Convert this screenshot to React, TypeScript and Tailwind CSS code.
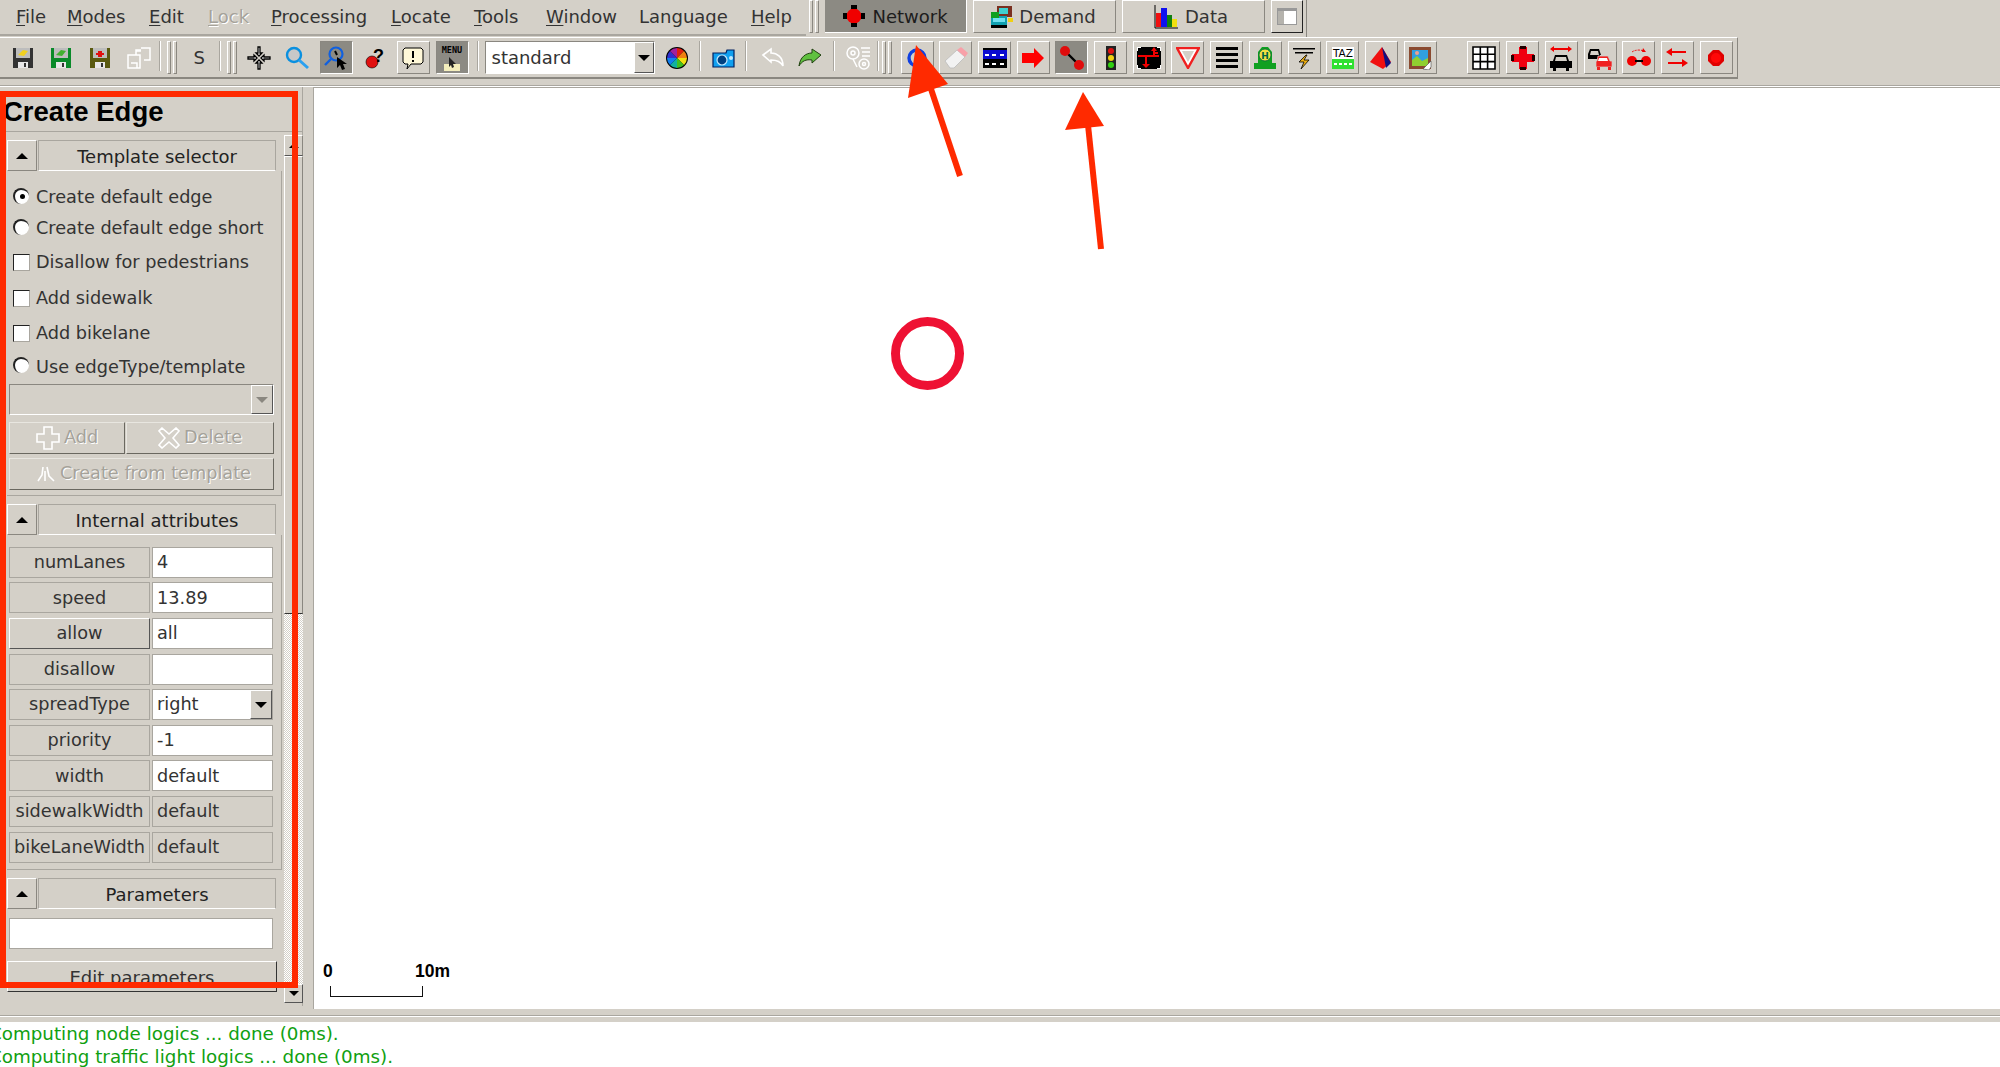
import type { ReactNode } from "react";

const RAISED = "border border-t-white border-l-white border-r-[#8a8780] border-b-[#8a8780]";
const FIELD = "border border-[#a9a69f]";

function Disk({ frame, mark }: { frame: string; mark: ReactNode }) {
  return (
    <svg width="22" height="22" viewBox="0 0 22 22">
      <path d="M1 1h20v20H1z" fill={frame} />
      <path d="M4 1h14v10H4z" fill="#bdbdbd" />
      <path d="M6 15h10v6H6z" fill="#e8e8e8" />
      <path d="M12 16h2v4h-2z" fill="#333" />
      {mark}
    </svg>
  );
}

const icons: Record<string, ReactNode> = {
  saveYellow: <Disk frame="#333" mark={<path d="M6 8l5-5 5 1-4 5z" fill="#f0d020" />} />,
  saveGreen: <Disk frame="#0a8a2a" mark={<path d="M6 8l5-5 5 1-4 5z" fill="#40b030" />} />,
  saveRed: <Disk frame="#5a5a10" mark={<path d="M9 4h4v2h2v2h-2v2H9V8H7V6h2z" fill="#e01010" />} />,
  saveAll: (
    <svg width="24" height="24" viewBox="0 0 24 24" fill="none" stroke="#fff" strokeWidth="1.5">
      <path d="M1 9h12v13H1zM4 17h6v5M9 5h5M14 2h9v12h-6" />
      <path d="M9 9V4h5" />
    </svg>
  ),
  center: (
    <svg width="26" height="26" viewBox="0 0 26 26" fill="#fff" stroke="#000" strokeWidth="1.3">
      <path d="M13 11l-3-3h2V2h2v6h2zM13 15l-3 3h2v6h2v-6h2zM11 13l-3-3v2H2v2h6v2zM15 13l3-3v2h6v2h-6v2z" />
    </svg>
  ),
  zoom: (
    <svg width="26" height="26" viewBox="0 0 26 26" fill="none">
      <circle cx="10" cy="10" r="7" fill="#c8c8c8" stroke="#0a90e0" strokeWidth="2.4" />
      <path d="M15 15l9 8" stroke="#2aa0f0" strokeWidth="3" />
    </svg>
  ),
  locate: (
    <svg width="26" height="26" viewBox="0 0 26 26" fill="none">
      <circle cx="13" cy="9" r="6.5" fill="#8c8a83" stroke="#1060e0" strokeWidth="2.2" />
      <path d="M8 14l-6 6" stroke="#1060e0" strokeWidth="2.4" />
      <path d="M12 6l2 4" stroke="#000" strokeWidth="2" />
      <path d="M14 12v11l3-3 2 5 3-1-2-5h4z" fill="#000" />
    </svg>
  ),
  inspect: (
    <svg width="24" height="24" viewBox="0 0 24 24">
      <circle cx="9" cy="16" r="6" fill="#e01010" stroke="#000" strokeWidth="0.6" />
      <text x="10" y="16" fontSize="18" fontWeight="700" fontFamily="Liberation Sans, sans-serif" fill="#000">?</text>
    </svg>
  ),
  bubble: (
    <svg width="22" height="24" viewBox="0 0 22 24">
      <path d="M3 2h16l2 2v12l-2 2H9l-4 5 1-5H3l-2-2V4z" fill="#fff8d8" stroke="#000" strokeWidth="1" />
      <path d="M10 5h2v7h-2zM10 14h2v2h-2z" fill="#000" />
    </svg>
  ),
  menu: (
    <svg width="28" height="28" viewBox="0 0 28 28">
      <text x="14" y="9" textAnchor="middle" fontSize="8.5" fontFamily="DejaVu Sans Mono, monospace" fontWeight="700" fill="#000">MENU</text>
      <path d="M6 20h16v7H6z" fill="#f4eebc" />
      <path d="M11 13v10l2-2 1 3 2-1-1-3h3z" fill="#222" />
    </svg>
  ),
  colors: (
    <svg width="24" height="24" viewBox="0 0 24 24">
      <circle cx="12" cy="12" r="11" fill="#000" />
      <path d="M12 12V2a10 10 0 0 1 7 3z" fill="#e02010" />
      <path d="M12 12l7-7a10 10 0 0 1 3 7z" fill="#f08010" />
      <path d="M12 12h10a10 10 0 0 1-3 7z" fill="#f0e010" />
      <path d="M12 12l7 7a10 10 0 0 1-7 3z" fill="#40c020" />
      <path d="M12 12v10a10 10 0 0 1-7-3z" fill="#10b0a0" />
      <path d="M12 12l-7 7a10 10 0 0 1-3-7z" fill="#1080f0" />
      <path d="M12 12H2a10 10 0 0 1 3-7z" fill="#3030d0" />
      <path d="M12 12L5 5a10 10 0 0 1 7-3z" fill="#a020a0" />
    </svg>
  ),
  camera: (
    <svg width="24" height="22" viewBox="0 0 24 22">
      <path d="M1 6h13l1-3h7v17H1z" fill="#10a0f0" stroke="#002060" strokeWidth="1.2" />
      <circle cx="10" cy="13" r="5" fill="#004080" stroke="#c0e8ff" strokeWidth="1.2" />
      <circle cx="19" cy="11" r="2" fill="#c0e8ff" />
    </svg>
  ),
  undo: (
    <svg width="24" height="22" viewBox="0 0 24 22" fill="none" stroke="#fff" strokeWidth="1.6">
      <path d="M2 8l8-6v4c6 0 12 4 12 13-2-4-6-6-12-6v2z" />
    </svg>
  ),
  redo: (
    <svg width="24" height="20" viewBox="0 0 24 20">
      <path d="M23 7l-9-6v4C8 5 2 9 1 18c3-5 7-7 13-6v3z" fill="#60c040" stroke="#204010" strokeWidth="1" />
    </svg>
  ),
  gear: (
    <svg width="26" height="26" viewBox="0 0 26 26" fill="none" stroke="#fff" strokeWidth="1.5">
      <circle cx="8" cy="8" r="6" />
      <circle cx="8" cy="8" r="2" />
      <circle cx="19" cy="19" r="5" />
      <circle cx="19" cy="19" r="1.5" />
      <path d="M16 3h9M17 7h8M17 11h8M8 14l4 8" />
    </svg>
  ),
  junction: (
    <svg width="24" height="24" viewBox="0 0 24 24">
      <circle cx="12" cy="12" r="8" fill="none" stroke="#1040e0" strokeWidth="3.4" />
    </svg>
  ),
  eraser: (
    <svg width="26" height="26" viewBox="0 0 26 26">
      <path d="M2 16L14 5l8 7-11 11H7z" fill="#f2f2f2" stroke="#bbb" strokeWidth="0.8" />
      <path d="M14 5l4-3 7 6-3 4z" fill="#f8a0a8" />
    </svg>
  ),
  lanes: (
    <svg width="26" height="26" viewBox="0 0 26 26">
      <path d="M1 3h24v20H1z" fill="#000" />
      <path d="M1 5h24v9H1z" fill="#0a0ad0" />
      <path d="M3 9h4v2H3zM10 9h4v2h-4zM18 9h4v2h-4zM3 18h4v2H3zM10 18h4v2h-4zM18 18h4v2h-4z" fill="#fff" />
    </svg>
  ),
  arrow: (
    <svg width="24" height="20" viewBox="0 0 24 20">
      <path d="M1 5h12V0l10 10-10 10v-5H1z" fill="#ff0000" />
    </svg>
  ),
  edge: (
    <svg width="26" height="26" viewBox="0 0 26 26">
      <path d="M7 7l13 13" stroke="#000" strokeWidth="2.4" />
      <circle cx="6" cy="6" r="5" fill="#e00c0c" />
      <circle cx="20" cy="20" r="5" fill="#e00c0c" />
    </svg>
  ),
  tls: (
    <svg width="12" height="26" viewBox="0 0 12 26">
      <path d="M1 1h10v24H1z" fill="#222" />
      <circle cx="6" cy="6" r="3" fill="#e01010" />
      <circle cx="6" cy="13" r="3" fill="#f0d010" />
      <circle cx="6" cy="20" r="3" fill="#30d010" />
    </svg>
  ),
  connect: (
    <svg width="26" height="26" viewBox="0 0 26 26">
      <path d="M1 2h24v22H1z" fill="#000" />
      <path d="M1 2h4v1H2v3H1zM21 2h4v4h-1V3h-3zM1 20h1v3h3v1H1zM24 20h1v4h-4v-1h3z" fill="#fff" />
      <path d="M2 10h21v2H2zM9 10h2v11H9z" fill="#f00000" />
      <path d="M6 19h8l-4 4zM17 11V5h2v6zM15 6l3-4 3 4zM19 7h3v2h-3z" fill="#f00000" />
    </svg>
  ),
  yield: (
    <svg width="24" height="22" viewBox="0 0 24 22">
      <path d="M1 1h22L12 21z" fill="#fff" stroke="#f02020" strokeWidth="2.4" />
      <path d="M6 4h12l-6 11z" fill="#d4d0c8" />
    </svg>
  ),
  stripes: (
    <svg width="24" height="24" viewBox="0 0 24 24">
      <path d="M1 1h22v3H1zM1 7h22v3H1zM1 13h22v3H1zM1 19h22v3H1z" fill="#000" />
    </svg>
  ),
  stop: (
    <svg width="24" height="24" viewBox="0 0 24 24">
      <path d="M1 23v-6h4V6l4-5h6l4 5v11h4v6z" fill="#10a020" />
      <circle cx="12" cy="9" r="6" fill="#f0e040" stroke="#064" strokeWidth="0.8" />
      <text x="12" y="12.5" textAnchor="middle" fontSize="9" fontWeight="700" fontFamily="DejaVu Sans, sans-serif" fill="#064">H</text>
    </svg>
  ),
  charging: (
    <svg width="24" height="24" viewBox="0 0 24 24">
      <path d="M1 2h22v1.5H1zM3 6h18v1.5H3z" fill="#000" />
      <path d="M14 9l-7 7h5l-3 7 8-9h-5l3-5z" fill="#f0b010" stroke="#000" strokeWidth="0.8" />
    </svg>
  ),
  taz: (
    <svg width="24" height="24" viewBox="0 0 24 24">
      <path d="M1 1h22v12H1z" fill="#fff" />
      <text x="12" y="11" textAnchor="middle" fontSize="10.5" fontFamily="DejaVu Sans, sans-serif" fill="#000">TAZ</text>
      <path d="M1 13h22v10H1z" fill="#30e030" />
      <path d="M3 17h3v2H3zM8 17h3v2H8zM13 17h3v2h-3zM18 17h3v2h-3z" fill="#fff" />
    </svg>
  ),
  poly: (
    <svg width="24" height="24" viewBox="0 0 24 24">
      <path d="M1 16L13 1l9 15-8 7z" fill="#f01010" />
      <path d="M13 1l9 16-5 5z" fill="#101080" />
    </svg>
  ),
  picture: (
    <svg width="24" height="24" viewBox="0 0 24 24">
      <path d="M1 1h22v22H1z" fill="#8a4a30" />
      <path d="M4 4h16v16H4z" fill="#30a0e0" />
      <path d="M4 20v-6l5-4 5 5 6-3v8z" fill="#90d030" />
      <circle cx="9" cy="7" r="2" fill="#f0a090" />
      <path d="M15 23l8-8v6l-2 3z" fill="#fff" stroke="#444" strokeWidth="0.6" />
    </svg>
  ),
  grid: (
    <svg width="24" height="24" viewBox="0 0 24 24" fill="#fff" stroke="#000" strokeWidth="1.6">
      <path d="M1 1h22v22H1zM1 8.3h22M1 15.6h22M8.3 1v22M15.6 1v22" />
    </svg>
  ),
  cross: (
    <svg width="24" height="24" viewBox="0 0 24 24">
      <path d="M8 1h8v7h7v8h-7v7H8v-7H1V8h7z" fill="#f00010" />
      <path d="M9 0h6v3H9zM9 21h6v3H9zM0 9h3v6H0zM21 9h3v6h-3z" fill="#200000" />
    </svg>
  ),
  carArrows: (
    <svg width="24" height="26" viewBox="0 0 24 26">
      <path d="M1 4l4-3v2h14V1l4 3-4 3V5H5v2z" fill="#f00000" />
      <path d="M6 10h12l2 6h3v7h-3v3h-3v-3H7v3H4v-3H1v-7h3z" fill="#000" />
      <path d="M7 12h10l1 4H6z" fill="#d4d0c8" />
    </svg>
  ),
  cars: (
    <svg width="26" height="24" viewBox="0 0 26 24" fill="none">
      <path d="M3 3h9l2 6h-1v4H1V8z" fill="#000" />
      <path d="M4 5h7l1 4H3z" fill="#d4d0c8" />
      <path d="M11 10h10l2 5h2v6H9v-6h1z" fill="#f02020" stroke="#d4d0c8" strokeWidth="0.7" />
      <path d="M12 12h8l1 3H11z" fill="#fff" />
      <path d="M10 21h3v3h-3zM21 21h3v3h-3z" fill="#f02020" />
    </svg>
  ),
  stack: (
    <svg width="24" height="22" viewBox="0 0 24 22">
      <path d="M5 5a8 4 0 0 1 12-1" fill="none" stroke="#f00000" strokeWidth="1" strokeDasharray="2 1" />
      <path d="M16 1l3 4h-4z" fill="#f00000" />
      <circle cx="5" cy="14" r="5" fill="#f00000" />
      <circle cx="19" cy="14" r="5" fill="#f00000" />
      <path d="M8 13h8v2H8z" fill="#000" />
    </svg>
  ),
  swap: (
    <svg width="24" height="20" viewBox="0 0 24 20" fill="#f00000">
      <path d="M1 4l6-4v3h14v2H7v3zM23 15l-6 4v-3H3v-2h14v-3z" />
    </svg>
  ),
  dot: (
    <svg width="18" height="18" viewBox="0 0 18 18">
      <path d="M6 1h6l5 5v6l-5 5H6l-5-5V6z" fill="#e00000" />
      <circle cx="9" cy="9" r="5" fill="#ff0808" />
    </svg>
  ),
};

const menus: [string, string, string][] = [
  ["F", "ile", "w-[51px]"],
  ["M", "odes", "w-[82px]"],
  ["E", "dit", "w-[59px]"],
  ["L", "ock", "w-[63px]"],
  ["P", "rocessing", "w-[120px]"],
  ["L", "ocate", "w-[83px]"],
  ["T", "ools", "w-[72px]"],
  ["W", "indow", "w-[93px]"],
];

function Flat({ name, children, className = "" }: { name?: string; children?: ReactNode; className?: string }) {
  return (
    <div className={`w-[33px] h-[33px] shrink-0 flex items-center justify-center ${className}`}>
      {name ? icons[name] : children}
    </div>
  );
}

function IconBtn({ name, active }: { name: string; active?: boolean }) {
  return (
    <div className={`w-[33px] h-[33px] shrink-0 flex items-center justify-center ${active ? "bg-[#8c8a83] border border-t-[#8a8780] border-l-[#8a8780] border-r-white border-b-white" : RAISED}`}>
      {icons[name]}
    </div>
  );
}

function Grip({ className = "" }: { className?: string }) {
  return (
    <div className={`h-[33px] w-[10px] shrink-0 flex justify-between ${className}`}>
      <div className={`w-[4px] ${RAISED}`} />
      <div className={`w-[4px] ${RAISED}`} />
    </div>
  );
}

function Sep({ className }: { className: string }) {
  return <div className={`h-[30px] w-[2px] shrink-0 bg-[#a9a69f] border-r border-white ${className}`} />;
}

function TabBtn({ label, active, icon, className }: { label: string; active?: boolean; icon: ReactNode; className: string }) {
  return (
    <div className={`h-[33px] shrink-0 flex items-center justify-center text-[18px] ${className} ${active ? "bg-[#8c8a83] text-[#1c1c1c] border-b border-r border-white" : RAISED + " text-[#333]"}`}>
      {icon}
      {label}
    </div>
  );
}

function Header({ label }: { label: string }) {
  return (
    <div className="flex h-[31px] gap-px shrink-0">
      <div className={`w-[30px] flex items-center justify-center ${RAISED} border-t-[#d4d0c8]`}>
        <div className="w-0 h-0 border-x-[6px] border-x-transparent border-b-[6px] border-b-black" />
      </div>
      <div className="w-[238px] flex items-center justify-center pt-px text-[18px] text-[#222] border border-[#a9a69f] border-b-white">
        {label}
      </div>
    </div>
  );
}

function Radio({ on, label, className }: { on?: boolean; label: string; className: string }) {
  return (
    <div className={`flex items-center gap-[7px] pl-[6px] text-[17.7px] text-[#333] ${className}`}>
      <div className="w-[16px] h-[16px] -mt-[4px] rounded-full bg-white border-t-2 border-l-2 border-[#222] flex items-center justify-center">
        {on && <div className="w-[5px] h-[5px] rounded-full bg-black" />}
      </div>
      {label}
    </div>
  );
}

function Check({ label, className }: { label: string; className: string }) {
  return (
    <div className={`flex items-center gap-[6px] pl-[6px] text-[17.7px] text-[#333] ${className}`}>
      <div className="w-[17px] h-[17px] bg-white border-t border-l border-t-[#222] border-l-[#222] border-r border-b border-r-[#a9a69f] border-b-[#a9a69f]" />
      {label}
    </div>
  );
}

function DisabledBtn({ className, icon, label }: { className: string; icon: ReactNode; label: string }) {
  return (
    <div className={`h-[32px] flex items-center justify-center gap-[4px] text-[17.7px] text-[#a5a29a] [text-shadow:1px_1px_0_#fff] border border-t-[#e8e6e0] border-l-[#e8e6e0] border-r-[#6a6860] border-b-[#6a6860] ${className}`}>
      {icon}
      {label}
    </div>
  );
}

const rows: { label: string; value: string; kind?: "combo" | "off"; strong?: boolean }[] = [
  { label: "numLanes", value: "4" },
  { label: "speed", value: "13.89" },
  { label: "allow", value: "all", strong: true },
  { label: "disallow", value: "" },
  { label: "spreadType", value: "right", kind: "combo" },
  { label: "priority", value: "-1" },
  { label: "width", value: "default" },
  { label: "sidewalkWidth", value: "default", kind: "off" },
  { label: "bikeLaneWidth", value: "default", kind: "off" },
];

function AttrRow({ label, value, kind, strong }: (typeof rows)[number]) {
  return (
    <div className="flex h-[31px] gap-[2px] text-[17.7px] text-[#333]">
      <div className={`w-[141px] flex items-center justify-center ${strong ? RAISED + " border-r-[#555] border-b-[#555]" : FIELD}`}>{label}</div>
      <div className={`w-[121px] flex items-center pl-[4px] relative ${FIELD} ${kind === "off" ? "" : "bg-white"}`}>
        {value}
        {kind === "combo" && (
          <div className={`absolute right-0 top-0 w-[22px] h-[29px] bg-[#d4d0c8] flex items-center justify-center ${RAISED} border-r-[#555] border-b-[#555]`}>
            <div className="w-0 h-0 border-x-[6px] border-x-transparent border-t-[6px] border-t-black" />
          </div>
        )}
      </div>
    </div>
  );
}

function Toolbar() {
  return (
    <div className="flex h-[40px] shrink-0 items-start pt-[3px] pl-[6px] gap-[5.7px] w-[1738px] border-t border-white border-r border-r-[#8a8780]">
      {["saveYellow", "saveGreen", "saveRed", "saveAll"].map((n) => (
        <Flat key={n} name={n} />
      ))}
      <Sep className="-ml-[1.5px]" />
      <Grip />
      <Flat>
        <span className="text-[18px] text-[#333]">S</span>
      </Flat>
      <Sep className="-ml-[2.5px]" />
      <Grip />
      <Flat name="center" />
      <Flat name="zoom" />
      <IconBtn name="locate" active />
      <Flat name="inspect" />
      <IconBtn name="bubble" />
      <IconBtn name="menu" active />
      <Sep className="ml-[2.5px]" />
      <div className="w-[170px] h-[33px] shrink-0 bg-white flex items-center pl-[6px] text-[18px] text-[#333] relative border border-t-[#8a8780] border-l-[#8a8780] border-r-white border-b-white">
        standard
        <div className={`absolute right-0 top-0 bottom-0 w-[20px] bg-[#d4d0c8] flex items-center justify-center ${RAISED} border-r-[#555] border-b-[#555]`}>
          <div className="w-0 h-0 border-x-[6px] border-x-transparent border-t-[6px] border-t-black" />
        </div>
      </div>
      <Flat name="colors" />
      <Sep className="mx-[0.5px]" />
      <Flat name="camera" />
      <Sep className="-ml-[1px] mr-[3.5px]" />
      <Flat name="undo" />
      <Flat name="redo" className="-ml-[1.4px]" />
      <Sep className="mx-[0.5px]" />
      <Flat name="gear" />
      <Sep className="-ml-[3px] -mr-[2px]" />
      <Grip className="mr-[2.5px]" />
      {["junction", "eraser", "lanes", "arrow", "edge", "tls", "connect", "yield", "stripes", "stop", "charging", "taz", "poly", "picture"].map((n) => (
        <IconBtn key={n} name={n} active={n === "edge"} />
      ))}
      <div className="w-[19.5px] shrink-0" />
      {["grid", "cross", "carArrows", "cars", "stack", "swap", "dot"].map((n) => (
        <IconBtn key={n} name={n} />
      ))}
    </div>
  );
}

export default function App() {
  return (
    <div className="relative w-[2000px] h-[1067px] overflow-hidden flex flex-col bg-[#d4d0c8] font-['DejaVu_Sans',sans-serif]">
      {/* menu bar + supermode buttons */}
      <div className="flex h-[37px] shrink-0 w-[1307px] border-r border-[#8a8780]">
        <div className="flex items-center pl-[16px] pb-[2px] text-[18px] text-[#333] w-[806px] h-[36px] border-b-2 border-[#a9a69f] shrink-0">
          {menus.map(([first, rest, width], i) => (
            <span key={first + rest} className={`shrink-0 ${width} ${i === 3 ? "text-[#a5a29a] [text-shadow:1px_1px_0_#fff]" : ""}`}>
              <span className="underline underline-offset-2">{first}</span>
              {rest}
            </span>
          ))}
          <span className="shrink-0 w-[112px]">Language</span>
          <span className="shrink-0">
            <span className="underline underline-offset-2">H</span>elp
          </span>
        </div>
        <div className="flex gap-[6px] pl-[3px] items-start">
          <Grip />
          <TabBtn
            label="Network"
            active
            className="w-[142px] gap-[7px]"
            icon={
              <svg width="22" height="22" viewBox="0 0 22 22">
                <circle cx="11" cy="11" r="7.5" fill="#f00000" />
                <path d="M8 0h6v4H8zM8 18h6v4H8zM0 8h4v6H0zM18 8h4v6h-4z" fill="#000" />
              </svg>
            }
          />
          <TabBtn
            label="Demand"
            className="w-[143px] gap-[5px] pr-[3px]"
            icon={
              <svg width="24" height="24" viewBox="0 0 24 24">
                <path d="M7 1h15v11H7z" fill="#7a3020" />
                <path d="M9 3h9v6H9z" fill="#40d0d0" />
                <path d="M1 11h16v10H1z" fill="#10a0b0" />
                <path d="M1 7h8v6H1z" fill="#10a020" />
                <path d="M3 13h12v4H3z" fill="#70e0f0" />
                <path d="M1 20h16v3H1z" fill="#000" />
                <path d="M18 13h5v4h-5z" fill="#f0d010" />
              </svg>
            }
          />
          <TabBtn
            label="Data"
            className="w-[143px] gap-[7px] pr-[5px]"
            icon={
              <svg width="24" height="24" viewBox="0 0 24 24">
                <path d="M1 0v23h23" fill="none" stroke="#000" strokeWidth="1" />
                <path d="M2 8h5v14H2z" fill="#f01010" />
                <path d="M7 3h6v19H7z" fill="#1010f0" />
                <path d="M13 10h5v12h-5z" fill="#108010" />
                <path d="M18 14h5v8h-5z" fill="#f0e010" />
              </svg>
            }
          />
          <div className="w-[32px] h-[33px] flex items-center justify-center border border-t-white border-l-white border-r-[#222] border-b-[#222]">
            <div className="w-[20px] h-[17px] bg-white border-t-[3px] border-[#999] border-x border-b flex">
              <div className="w-[6px] bg-[#b5b3ad]" />
            </div>
          </div>
        </div>
      </div>

      <Toolbar />

      <div className="h-[2px] w-[1738px] shrink-0 bg-[#8a8780]" />
      <div className="h-[2px] shrink-0 mt-[6px] bg-[#a9a69f] border-b border-white" />

      {/* frame area */}
      <div className="flex flex-1 min-h-0">
        <div className="w-[303px] shrink-0 h-[919px] flex flex-col border-r border-[#a9a69f]">
          <div className="h-[45px] shrink-0 flex items-center text-[27.5px] leading-none font-bold pl-[3px] pt-[6px] text-black font-['Liberation_Sans',sans-serif] border-b border-[#a9a69f]">
            Create Edge
          </div>
          <div className="flex flex-1 min-h-0">
            <div className="w-[284px] shrink-0 pl-[7px] pt-[8px] overflow-hidden">
              <Header label="Template selector" />
              <div className="w-[275px] h-[325.3px] border-r border-b border-[#a9a69f] shrink-0">
                <Radio on label="Create default edge" className="h-[43px] pt-[10px]" />
                <Radio label="Create default edge short" className="h-[29px]" />
                <Check label="Disallow for pedestrians" className="h-[39px]" />
                <Check label="Add sidewalk" className="h-[32px]" />
                <Check label="Add bikelane" className="h-[38px]" />
                <Radio label="Use edgeType/template" className="h-[30px]" />
                <div className="mt-[2px] ml-[2px] w-[265px] h-[31px] relative border border-t-[#8a8780] border-l-[#8a8780] border-r-white border-b-white">
                  <div className={`absolute right-0 top-0 bottom-0 w-[22px] flex items-center justify-center ${RAISED} border-r-[#555] border-b-[#555]`}>
                    <div className="w-0 h-0 border-x-[6px] border-x-transparent border-t-[6px] border-t-[#8a8780]" />
                  </div>
                </div>
                <div className="flex ml-[2px] w-[265px] mt-[6.5px] gap-px">
                  <DisabledBtn
                    className="w-[116px]"
                    label="Add"
                    icon={
                      <svg width="24" height="24" viewBox="0 0 24 24" fill="none" stroke="#fff" strokeWidth="1.6">
                        <path d="M8 1h8v7h7v8h-7v7H8v-7H1V8h7z" />
                      </svg>
                    }
                  />
                  <DisabledBtn
                    className="flex-1"
                    label="Delete"
                    icon={
                      <svg width="22" height="22" viewBox="0 0 22 22" fill="none" stroke="#fff" strokeWidth="1.6">
                        <path d="M4 1l7 6 7-6 3 3-6 7 6 7-3 3-7-6-7 6-3-3 6-7-6-7z" />
                      </svg>
                    }
                  />
                </div>
                <DisabledBtn
                  className="ml-[2px] w-[265px] mt-[4px] pl-[4px]"
                  label="Create from template"
                  icon={
                    <svg width="20" height="18" viewBox="0 0 20 18" fill="none" stroke="#fff" strokeWidth="1.6">
                      <path d="M2 16l4-6 1-8M11 2l2 9 5 5M9 6v10" />
                    </svg>
                  }
                />
              </div>
              <div className="h-[8px]" />
              <Header label="Internal attributes" />
              <div className="w-[275px] h-[335px] border-r border-b border-[#a9a69f] pt-[11.5px] pl-[2px] flex flex-col gap-[4.6px]">
                {rows.map((r) => (
                  <AttrRow key={r.label} {...r} />
                ))}
              </div>
              <div className="h-[8px]" />
              <Header label="Parameters" />
              <div className="pt-[9px] pl-[2px]">
                <div className={`w-[264px] h-[31px] bg-white ${FIELD}`} />
                <div className={`mt-[11.5px] -ml-[2px] w-[270px] h-[31px] flex items-start justify-center pt-[2px] text-[18px] text-[#333] ${RAISED} border-r-[#333] border-b-[#333]`}>
                  Edit parameters
                </div>
              </div>
            </div>
            {/* scrollbar */}
            <div className="w-[19px] shrink-0 mt-[3px] mb-[3px] flex flex-col">
              <div className={`h-[21px] shrink-0 flex items-center justify-center ${RAISED} border-b-[#555]`}>
                <div className="w-0 h-0 border-x-[5px] border-x-transparent border-b-[5px] border-b-black" />
              </div>
              <div className={`h-[458px] shrink-0 ${RAISED} border-b-[#333]`} />
              <div className="flex-1 bg-[repeating-conic-gradient(#ffffff_0_25%,#d4d0c8_0_50%)] bg-[length:2px_2px]" />
              <div className={`h-[19px] shrink-0 flex items-center justify-center ${RAISED} border-r-[#555] border-b-[#555]`}>
                <div className="w-0 h-0 border-x-[5px] border-x-transparent border-t-[5px] border-t-black" />
              </div>
            </div>
          </div>
        </div>
        <div className="w-[10px] shrink-0" />
        {/* canvas */}
        <div className="relative flex-1 h-[922px] bg-white border-l border-t border-[#a9a69f]">
          <div className="absolute left-[9px] top-[877px] w-[120px] h-[36px] text-black text-[17.5px] leading-none font-['Liberation_Sans',sans-serif] font-bold">
            <span className="absolute left-0 top-[-2px]">0</span>
            <span className="absolute left-[92px] top-[-2px]">10m</span>
            <div className="absolute left-[7px] top-[21px] w-[93px] h-[11px] border-x border-b border-[#111]" />
          </div>
        </div>
      </div>

      {/* message window */}
      <div className="h-[2px] mt-[6px] shrink-0 bg-[#a9a69f] border-b border-white" />
      <div className="h-[45px] shrink-0 mt-[5px] bg-white text-[#10a010] text-[18.3px] leading-[23px] overflow-hidden whitespace-nowrap -ml-[11px]">
        <div>Computing node logics ... done (0ms).</div>
        <div>Computing traffic light logics ... done (0ms).</div>
      </div>

      {/* annotations drawn over the screenshot */}
      <div className="absolute left-0 top-[91px] w-[298px] h-[897px] border-[6px] border-[#ff2a00] pointer-events-none" />
      <div className="absolute left-[891px] top-[317px] w-[73px] h-[73px] rounded-full border-[9px] border-[#ee1133] pointer-events-none" />
      <svg className="absolute left-0 top-0 pointer-events-none" width="1200" height="260" viewBox="0 0 1200 260">
        <path d="M960 176L928 80" stroke="#ff2a00" strokeWidth="6" />
        <path d="M916 45L908 98 948 84z" fill="#ff2a00" />
        <path d="M1101 249L1088 125" stroke="#ff2a00" strokeWidth="6" />
        <path d="M1083 92L1065 130 1104 126z" fill="#ff2a00" />
      </svg>
    </div>
  );
}
